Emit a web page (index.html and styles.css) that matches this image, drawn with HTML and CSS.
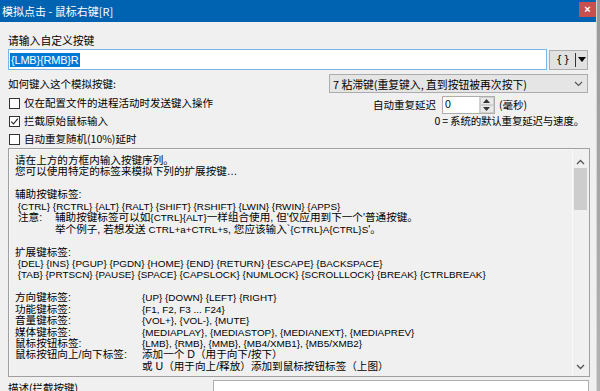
FILE: index.html
```html
<!DOCTYPE html>
<html lang="zh-CN">
<head>
<meta charset="utf-8">
<title>模拟点击 - 鼠标右键[R]</title>
<link rel="stylesheet" href="styles.css">
</head>
<body>
<div class="screen">
  <div class="window">
    <div class="titlebar">
      <span class="title">模拟点击 - 鼠标右键[R]</span>
      <span class="close">×</span>
    </div>
    <div class="content">
      <div class="label-main">请输入自定义按键</div>
      <div class="key-row">
        <div class="key-input"><span class="selected">{LMB}{RMB}R</span></div>
        <div class="brace-btn">
          <span class="braces">{ }</span>
          <span class="btn-sep"></span>
          <span class="btn-tri"></span>
        </div>
      </div>
      <div class="how-row">
        <span class="how-label">如何键入这个模拟按键:</span>
        <div class="combo">
          <span>7 粘滞键(重复键入, 直到按钮被再次按下)</span>
          <svg class="chev" width="9" height="6" viewBox="0 0 9 6"><path d="M1 1 L4.5 4.5 L8 1" fill="none" stroke="#555" stroke-width="1.1"/></svg>
        </div>
      </div>
      <div class="opts">
        <div class="checks">
          <label class="check"><span class="box"></span>仅在配置文件的进程活动时发送键入操作</label>
          <label class="check"><span class="box"><svg width="9" height="9" viewBox="0 0 9 9"><path d="M1.2 4.6 L3.5 7 L7.8 1.6" fill="none" stroke="#222" stroke-width="1.1"/></svg></span>拦截原始鼠标输入</label>
          <label class="check"><span class="box"></span>自动重复随机(10%)延时</label>
        </div>
        <div class="delay">
          <div class="delay-row">
            <span class="delay-label">自动重复延迟</span>
            <div class="spin">
              <span class="spin-text">0</span>
              <span class="spin-btns">
                <span class="spin-b"><svg width="7" height="4" viewBox="0 0 7 4"><path d="M0 4 L3.5 0 L7 4Z" fill="#333"/></svg></span>
                <span class="spin-b"><svg width="7" height="4" viewBox="0 0 7 4"><path d="M0 0 L3.5 4 L7 0Z" fill="#333"/></svg></span>
              </span>
            </div>
            <span class="unit">(毫秒)</span>
          </div>
          <div class="delay-note">0 = 系统的默认重复延迟与速度。</div>
        </div>
      </div>
      <div class="help">
        <div class="help-text">
          <div class="ln">请在上方的方框内输入按键序列。</div>
          <div class="ln">您可以使用特定的标签来模拟下列的扩展按键…</div>
          <div class="ln">&nbsp;</div>
          <div class="ln">辅助按键标签:</div>
          <div class="ln lat">&nbsp;{CTRL} {RCTRL} {ALT} {RALT} {SHIFT} {RSHIFT} {LWIN} {RWIN} {APPS}</div>
          <div class="ln note"><span class="note-k">&nbsp;注意:</span><span>辅助按键标签可以如<span class="lat">{CTRL}{ALT}</span>一样组合使用, 但'仅应用到下一个'普通按键。</span></div>
          <div class="ln note"><span class="note-k"></span><span>举个例子, 若想发送 <span class="lat">CTRL+a+CTRL+s</span>, 您应该输入`<span class="lat">{CTRL}A{CTRL}S</span>'。</span></div>
          <div class="ln">&nbsp;</div>
          <div class="ln">扩展键标签:</div>
          <div class="ln lat">&nbsp;{DEL} {INS} {PGUP} {PGDN} {HOME} {END} {RETURN} {ESCAPE} {BACKSPACE}</div>
          <div class="ln lat">&nbsp;{TAB} {PRTSCN} {PAUSE} {SPACE} {CAPSLOCK} {NUMLOCK} {SCROLLLOCK} {BREAK} {CTRLBREAK}</div>
          <div class="ln">&nbsp;</div>
          <div class="ln kv"><span class="k">方向键标签:</span><span class="lat">{UP} {DOWN} {LEFT} {RIGHT}</span></div>
          <div class="ln kv"><span class="k">功能键标签:</span><span class="lat">{F1, F2, F3 ... F24}</span></div>
          <div class="ln kv"><span class="k">音量键标签:</span><span class="lat">{VOL+}, {VOL-}, {MUTE}</span></div>
          <div class="ln kv"><span class="k">媒体键标签:</span><span class="lat">{MEDIAPLAY}, {MEDIASTOP}, {MEDIANEXT}, {MEDIAPREV}</span></div>
          <div class="ln kv"><span class="k">鼠标按钮标签:</span><span class="lat">{LMB}, {RMB}, {MMB}, {MB4/XMB1}, {MB5/XMB2}</span></div>
          <div class="ln kv"><span class="k">鼠标按钮向上/向下标签:</span><span>添加一个 D（用于向下/按下）</span></div>
          <div class="ln kv"><span class="k"></span><span>或 U（用于向上/释放）添加到鼠标按钮标签（上图）</span></div>
        </div>
        <div class="scrollbar">
          <svg class="sb-arrow" width="9" height="6" viewBox="0 0 9 6"><path d="M1 5 L4.5 1.5 L8 5" fill="none" stroke="#555" stroke-width="1.3"/></svg>
          <div class="sb-track"><div class="sb-thumb"></div></div>
          <svg class="sb-arrow" width="9" height="6" viewBox="0 0 9 6"><path d="M1 1 L4.5 4.5 L8 1" fill="none" stroke="#555" stroke-width="1.3"/></svg>
        </div>
      </div>
      <div class="desc-row">
        <span class="desc-label">描述(拦截按键)</span>
        <div class="desc-input"></div>
      </div>
    </div>
  </div>
  <div class="edge"></div>
</div>
</body>
</html>
```

FILE: styles.css
```css
* { box-sizing: border-box; }
html, body { margin: 0; padding: 0; }
body {
  width: 600px;
  height: 391px;
  overflow: hidden;
  font-family: "Liberation Sans", "Noto Sans CJK SC", sans-serif;
  color: #000;
  background: #f0f0f0;
}
.screen {
  display: flex;
  width: 600px;
  height: 391px;
}
.window {
  width: 597px;
  height: 391px;
  background: #f0f0f0;
  border-right: 1px solid #d6d6d6;
  display: flex;
  flex-direction: column;
}
.edge {
  width: 3px;
  height: 391px;
  background: linear-gradient(#9a9a9a, #b3b3b3);
}
.titlebar {
  height: 22px;
  background: #0063b1;
  display: flex;
  align-items: center;
  justify-content: space-between;
  padding-left: 2px;
  flex-shrink: 0;
}
.title {
  color: #fff;
  font-size: 11px;
  font-family: "Noto Sans CJK SC", sans-serif;
  line-height: 14px;
}
.close {
  width: 17px;
  height: 15px;
  margin-top: -3px;
  background: #c94f4f;
  color: #fff;
  font-size: 11px;
  line-height: 14px;
  text-align: center;
  font-weight: bold;
}
.content {
  padding: 7px 0 0 8px;
  display: flex;
  flex-direction: column;
}
.label-main {
  font-family: "Noto Sans CJK SC", sans-serif;
  font-size: 10.8px;
  line-height: 14px;
  height: 16px;
  margin-top: 4px;
}
.key-row {
  display: flex;
  align-items: center;
  height: 21px;
}
.key-input {
  width: 539px;
  height: 21px;
  background: #fff;
  border: 1px solid #7fb5e6;
  padding: 1px 0 0 1px;
  display: flex;
  align-items: center;
}
.selected {
  background: #0078d7;
  color: #fff;
  font-size: 11px;
  line-height: 14px;
  padding: 0 1px;
  letter-spacing: -0.2px;
}
.brace-btn {
  margin-left: 2px;
  width: 39px;
  height: 20px;
  background: #e1e1e1;
  border: 1px solid #adadad;
  display: flex;
  align-items: center;
  padding-left: 6px;
}
.braces {
  font-size: 10px;
  font-family: "DejaVu Sans", sans-serif;
  width: 17px;
  letter-spacing: -1px;
}
.btn-sep {
  width: 1px;
  height: 14px;
  background: #333;
  margin-left: 2px;
}
.btn-tri {
  margin-left: 2px;
  width: 0;
  height: 0;
  border-left: 4.5px solid transparent;
  border-right: 4.5px solid transparent;
  border-top: 5px solid #000;
}
.how-row {
  display: flex;
  align-items: center;
  justify-content: space-between;
  margin-top: 4px;
  height: 19px;
  padding-right: 8px;
}
.how-label {
  font-family: "Noto Sans CJK SC", sans-serif;
  font-size: 10.5px;
  line-height: 14px;
}
.combo {
  width: 259px;
  height: 19px;
  background: #e5e5e5;
  border: 1px solid #acacac;
  display: flex;
  align-items: center;
  justify-content: space-between;
  padding: 0 4px 0 3px;
  font-family: "Noto Sans CJK SC", sans-serif;
  font-size: 10.8px;
  line-height: 14px;
}
.opts {
  display: flex;
  justify-content: space-between;
  padding-right: 12px;
  margin-top: 1px;
}
.checks {
  display: flex;
  flex-direction: column;
}
.check {
  display: flex;
  align-items: center;
  height: 18px;
  font-family: "Noto Sans CJK SC", sans-serif;
  font-size: 10.5px;
  line-height: 14px;
}
.box {
  width: 11px;
  height: 11px;
  border: 1px solid #333;
  background: #fff;
  margin-right: 4px;
  margin-left: 1px;
  display: flex;
  align-items: center;
  justify-content: center;
}
.delay {
  display: flex;
  flex-direction: column;
  align-items: flex-end;
}
.delay-row {
  display: flex;
  align-items: center;
  height: 19px;
  margin-top: 1px;
}
.delay-label, .unit, .delay-note {
  font-family: "Noto Sans CJK SC", sans-serif;
  font-size: 10.5px;
  line-height: 14px;
}
.delay-row .unit { margin-left: 4px; margin-right: 57px; }
.spin {
  margin-left: 6px;
  display: flex;
  height: 18px;
  border: 1px solid #adadad;
  background: #fff;
}
.spin-text {
  width: 36px;
  font-size: 10.5px;
  padding-left: 2px;
  line-height: 15px;
}
.spin-btns {
  width: 15px;
  display: flex;
  flex-direction: column;
  border-left: 1px solid #d0d0d0;
}
.spin-b {
  flex: 1;
  background: #eaeaea;
  border: 1px solid #cfcfcf;
  display: flex;
  align-items: center;
  justify-content: center;
}
.delay-note {
  letter-spacing: -0.2px;
}
.help {
  width: 582px;
  height: 229px;
  border: 1px solid #a0a0a0;
  box-shadow: inset 1px 1px 0 #f7f7f7;
  display: flex;
  background: #f0f0f0;
}
.help-text {
  flex: 1;
  padding: 6px 0 0 6px;
  font-family: "Liberation Sans", "Noto Sans CJK SC", sans-serif;
  font-size: 10.6px;
  overflow: hidden;
}
.ln {
  height: 11.45px;
  line-height: 11.45px;
  white-space: nowrap;
}
.lat {
  font-size: 9.9px;
}
.note { display: flex; }
.note-k { width: 40px; flex-shrink: 0; }
.kv { display: flex; }
.kv .k { width: 127px; flex-shrink: 0; }
.scrollbar {
  width: 16px;
  margin: 0 1px 0 0;
  display: flex;
  flex-direction: column;
  align-items: center;
  background: #f0f0f0;
  border-left: 1px solid #f8f8f8;
  padding: 10px 0 6px;
}
.sb-track {
  flex: 1;
  width: 100%;
  padding: 3px 1px 0;
}
.sb-thumb {
  height: 42px;
  background: #cdcdcd;
}
.desc-row {
  display: flex;
  align-items: flex-start;
  margin-top: 3px;
}
.desc-label {
  font-family: "Noto Sans CJK SC", sans-serif;
  font-size: 10.5px;
  line-height: 14px;
  width: 205px;
  padding-top: 1px;
}
.desc-input {
  width: 376px;
  height: 20px;
  background: #fff;
  border: 1px solid #adadad;
}
```
